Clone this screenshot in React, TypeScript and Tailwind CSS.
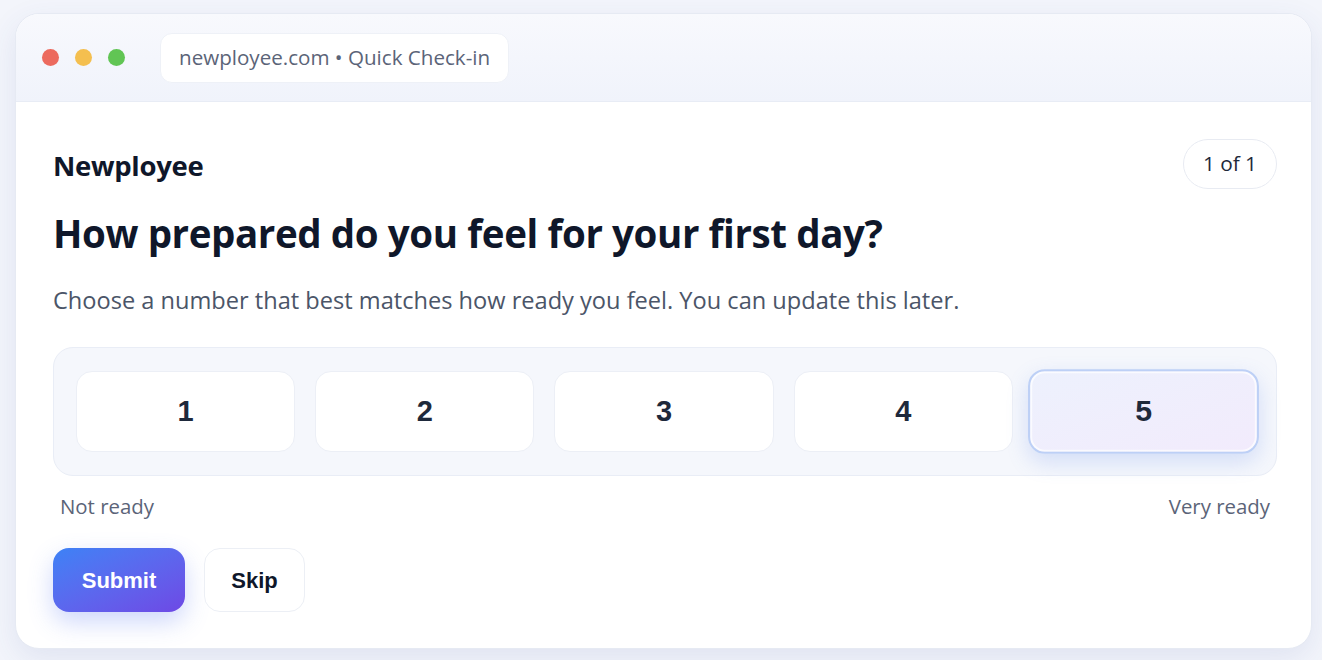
import React from "react";

const sans = { fontFamily: '"Open Sans", "Noto Sans", sans-serif' };
const arial = { fontFamily: '"Liberation Sans", Arial, sans-serif' };

export default function App() {
  const nums = [1, 2, 3, 4, 5];
  const selected = 5;
  return (
    <div className="w-[1322px] h-[660px] bg-[#f3f5fb] pl-[15px] pt-[13px] pr-[10px] pb-[11px]" style={sans}>
      <div className="h-full w-full rounded-[24px] bg-white border border-[#e6eaf3] shadow-[0_10px_30px_rgba(60,80,160,0.10)] overflow-hidden flex flex-col">
        <div className="h-[88px] shrink-0 bg-gradient-to-b from-[#f8f9fd] to-[#f0f3fb] border-b border-[#e8ecf5] flex items-center pl-[26px]">
          <div className="flex items-center gap-[16px]">
            <span className="w-[17px] h-[17px] rounded-full bg-[#ec6a5e]" />
            <span className="w-[17px] h-[17px] rounded-full bg-[#f4bf4f]" />
            <span className="w-[17px] h-[17px] rounded-full bg-[#61c554]" />
          </div>
          <div className="ml-[35px] h-[50px] px-[18px] rounded-[12px] bg-white border border-[#eef1f7] flex items-center text-[20.6px] text-[#5b6478]">
            newployee.com • Quick Check-in
          </div>
        </div>
        <div className="flex-1 pl-[37px] pr-[34px] pt-[37px]">
          <div className="flex items-center justify-between">
            <div className="text-[27.5px] leading-[36px] mt-[4px] font-bold text-[#0f172a] tracking-[-0.3px]">Newployee</div>
            <div className="h-[50px] px-[19px] rounded-full border border-[#e8ebf2] flex items-center text-[20.8px] text-[#1e293b]">
              1 of 1
            </div>
          </div>
          <h1 className="mt-[21px] text-[38.5px] leading-[46px] font-bold text-[#0f172a] tracking-[-0.4px]">
            How prepared do you feel for your first day?
          </h1>
          <p className="mt-[28px] text-[23.6px] leading-[32px] text-[#4b5568]">
            Choose a number that best matches how ready you feel. You can update this later.
          </p>
          <div className="mt-[31px] h-[129px] rounded-[20px] bg-[#f5f7fc] border border-[#e9edf6] px-[22px] flex items-center gap-[20px]">
            {nums.map((n) =>
              n === selected ? (
                <button
                  key={n}
                  className="flex-1 h-[81px] scale-[1.045] rounded-[16px] border-2 border-[#bdd0f6] bg-gradient-to-br from-[#edf1fd] to-[#f2ebfc] shadow-[inset_0_0_0_2px_rgba(255,255,255,0.7),0_8px_20px_rgba(90,130,230,0.22)] flex items-center justify-center text-[29px] font-bold text-[#1e293b]"
                  style={arial}
                >
                  {n}
                </button>
              ) : (
                <button
                  key={n}
                  className="flex-1 h-[81px] rounded-[16px] border border-[#eceff6] bg-white flex items-center justify-center text-[29px] font-bold text-[#1e293b]"
                  style={arial}
                >
                  {n}
                </button>
              )
            )}
          </div>
          <div className="mt-[16px] px-[7px] flex justify-between text-[20.4px] leading-[28px] text-[#5b6478]">
            <span>Not ready</span>
            <span>Very ready</span>
          </div>
          <div className="mt-[28px] flex items-center gap-[19px]" style={arial}>
            <button className="w-[132px] h-[64px] rounded-[16px] bg-gradient-to-br from-[#3b82f6] to-[#6d48e5] text-white text-[22px] font-bold shadow-[0_10px_24px_rgba(80,110,240,0.28)]">
              Submit
            </button>
            <button className="w-[101px] h-[64px] rounded-[16px] bg-white border border-[#eceff5] text-[#0f172a] text-[22px] font-bold">
              Skip
            </button>
          </div>
        </div>
      </div>
    </div>
  );
}
